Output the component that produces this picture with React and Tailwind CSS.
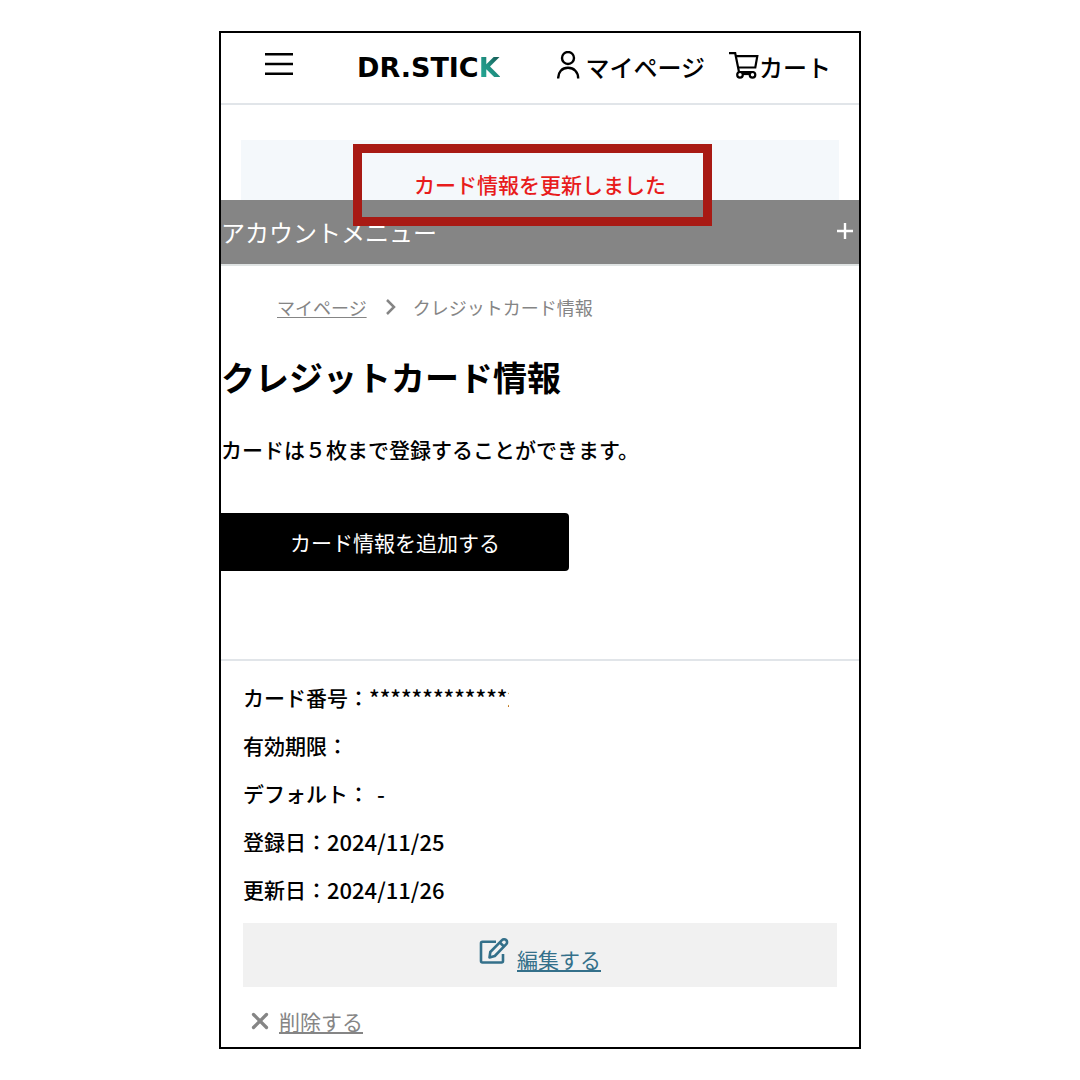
import { X } from 'lucide-react';

const details = [
    { label: '有効期限：', value: '' },
    { label: 'デフォルト：', value: '-', spaced: true },
    { label: '登録日：', value: '2024/11/25' },
    { label: '更新日：', value: '2024/11/26' },
];

const MenuIcon = () => (
    <svg width="28" height="24" viewBox="0 0 28 24" stroke="currentColor" strokeWidth="2.4" aria-hidden="true">
        <path d="M0 2.200h28M0 12h28M0 21.800h28" />
    </svg>
);

const UserIcon = () => (
    <svg width="24" height="28" viewBox="0 0 24 28" fill="none" stroke="currentColor" strokeWidth="2.4" aria-hidden="true">
        <circle cx="11" cy="7" r="6" />
        <path d="M1.200 27.500C1 21 5 16.800 11 16.800S21.200 21 21.200 27.500" />
    </svg>
);

const CartIcon = () => (
    <svg width="30" height="28" viewBox="0 0 30 28" fill="none" stroke="currentColor" strokeWidth="2.2" aria-hidden="true">
        <path d="M0 2.200h6.200l3.800 18.800h14.500" />
        <path d="M7 5.200h21.300l-2 11.300H9.300" />
        <circle cx="11" cy="23.800" r="2.800" />
        <circle cx="23.500" cy="23.800" r="2.800" />
        <path d="M13.500 23h7.500" />
    </svg>
);

const EditIcon = () => (
    <svg width="30" height="28" viewBox="0 0 30 28" fill="none" stroke="currentColor" strokeWidth="2.6" strokeLinejoin="round" aria-hidden="true">
        <path d="M17 4.800H3.500a1.500 1.500 0 0 0-1.500 1.500V24a1.500 1.500 0 0 0 1.500 1.500h19a1.500 1.500 0 0 0 1.500-1.500v-7" />
        <path d="M10.500 20.500l.8-5.500L23 3.200a2.900 2.900 0 0 1 4.300 4L15.800 19z" />
        <path d="M20.800 5.500l4.200 4" />
    </svg>
);

const Header = () => (
    <header className="flex h-[72px] items-center border-b-2 border-[#e1e5e9] pr-7 pb-1 pl-11">
        <button type="button" aria-label="メニュー" className="pb-1">
            <MenuIcon />
        </button>
        <a href="#" className="ml-16 flex pt-1 font-['DejaVu_Sans'] text-[27px] leading-7 font-bold">
            DR.STIC
            <span className="bg-linear-to-bl from-[#14504c] via-[#1f9384] to-[#27ad98] bg-clip-text text-transparent">K</span>
        </a>
        <nav className="ml-auto flex gap-6 text-2xl font-medium">
            <a href="#" className="flex items-start gap-1">
                <UserIcon />
                <span className="pt-0.5 leading-7">マイページ</span>
            </a>
            <a href="#" className="flex items-start">
                <CartIcon />
                <span className="pt-0.5 leading-7">カート</span>
            </a>
        </nav>
    </header>
);

const Notice = () => (
    <div role="status" className="relative mx-5 mt-[35px] h-15 bg-[#f4f8fb] pt-7 text-center font-medium text-[#e81c1c]">
        カード情報を更新しました
        <div className="absolute top-1 left-28 z-10 h-[82px] w-3/5 border-[9px] border-[#a81a14]" />
    </div>
);

const App = () => (
    <div className="min-h-screen bg-white px-4 py-[31px] font-['Noto_Sans_CJK_JP',sans-serif] text-[21px] leading-8 text-black">
        <div className="mx-auto max-w-[642px] border-2 border-black">
            <Header />
            <Notice />

            <button type="button" className="flex h-[66px] w-full items-center justify-between border-b-2 border-[#dfe3e3] bg-[#858585] text-2xl text-white">
                アカウントメニュー
                <svg width="16" height="16" viewBox="0 0 16 16" stroke="currentColor" strokeWidth="2.4" className="mr-1.5 mb-0.5" aria-hidden="true">
                    <path d="M8 0v16M0 8h16" />
                </svg>
            </button>

            <nav className="mt-[25px] ml-14 flex items-center text-lg leading-8 text-[#858585]">
                <a href="#" className="underline underline-offset-2">マイページ</a>
                <svg width="12" height="16" viewBox="0 0 12 16" fill="none" stroke="currentColor" strokeWidth="2.5" className="mr-4 ml-[18px]" aria-hidden="true">
                    <path d="M2 1l7 7-7 7" />
                </svg>
                <span>クレジットカード情報</span>
            </nav>

            <main>
                <h1 className="mt-[30px] text-[34px] leading-12 font-bold">クレジットカード情報</h1>
                <p className="mt-8 font-medium">カードは５枚まで登録することができます。</p>
                <button type="button" className="mt-12 h-[58px] w-[348px] rounded-r-sm bg-black text-white">
                    カード情報を追加する
                </button>

                <section className="mt-[88px] border-t-2 border-[#e1e5e9] px-[22px] pt-3 pb-2.5 font-medium">
                    <dl className="leading-12">
                        <div className="flex">
                            <dt>カード番号：</dt>
                            <dd className="w-[140px] overflow-hidden text-[22px] whitespace-nowrap">*************2</dd>
                        </div>
                        {details.map(({ label, value, spaced }) => (
                            <div key={label} className={spaced ? 'flex gap-2' : 'flex'}>
                                <dt>{label}</dt>
                                <dd className="text-[22px]">{value}</dd>
                            </div>
                        ))}
                    </dl>
                    <a href="#" className="mt-2.5 flex h-16 items-center justify-center gap-2 bg-[#f1f1f1] font-normal text-[#34708a]">
                        <span className="mb-2"><EditIcon /></span>
                        <span className="mt-2 underline underline-offset-2">編集する</span>
                    </a>
                    <a href="#" className="mt-[18px] ml-1 flex items-center gap-1.5 font-normal text-[#858585]">
                        <X size={26} strokeWidth={3} />
                        <span className="underline underline-offset-2">削除する</span>
                    </a>
                </section>
            </main>
        </div>
    </div>
);

export default App;
